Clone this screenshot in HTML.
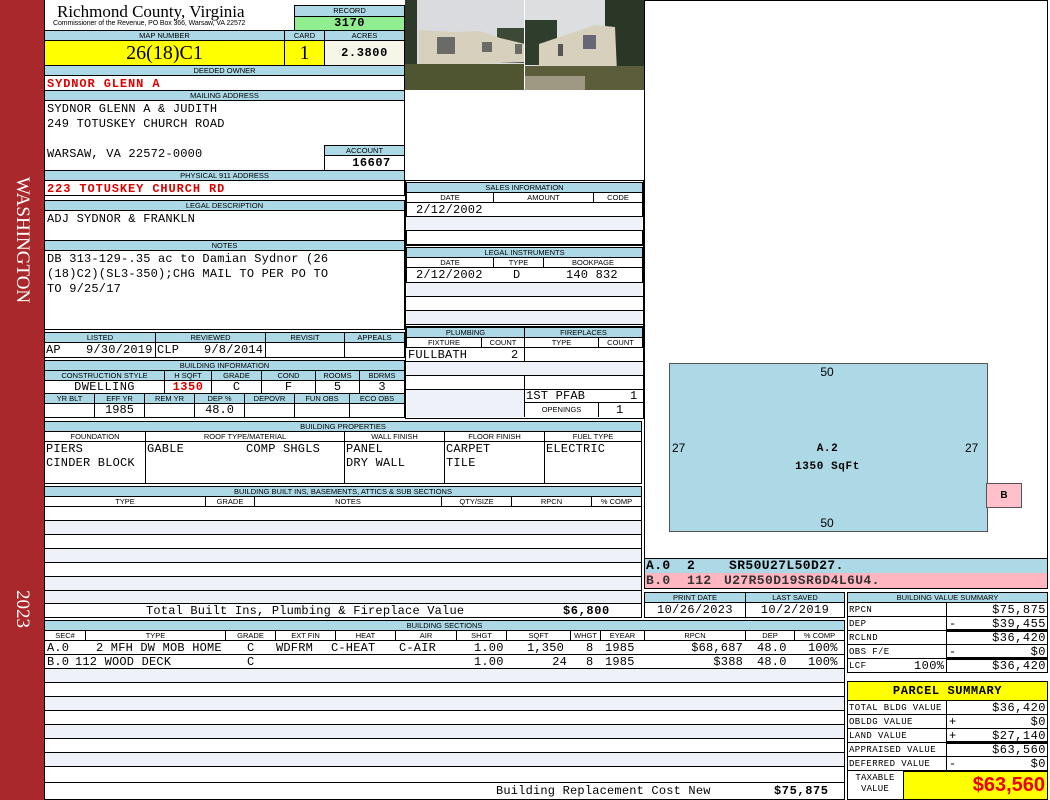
<!DOCTYPE html>
<html><head><meta charset="utf-8"><style>
*{margin:0;padding:0;box-sizing:border-box}
body{width:1050px;height:800px;background:#fff;position:relative;overflow:hidden;font-family:"Liberation Sans",sans-serif}
.a{position:absolute}
.h{position:absolute;background:#add8e6;border:1px solid #000;font:7.5px/9px "Liberation Sans",sans-serif;text-align:center;color:#000;white-space:nowrap;overflow:hidden}
.b{position:absolute;border:1px solid #000;background:#fff}
.m{position:absolute;font:12px/14px "Liberation Mono",monospace;letter-spacing:0.2px;color:#000;white-space:pre}
.r{color:#d00;font-weight:bold;letter-spacing:0.9px}
.l{position:absolute;background:#eef1f8}
.ln{position:absolute;background:#000;height:1px}
.vl{position:absolute;background:#000;width:1px}
.s{font-size:9px;letter-spacing:0.4px}
.rt{text-align:right}
</style></head><body>
<!-- side bar -->
<div class="a" style="left:0;top:0;width:44px;height:800px;background:#a8282b"></div>
<div class="a" style="left:22px;top:240px;transform:translate(-50%,-50%) rotate(90deg);color:#fff;font:19px 'Liberation Serif',serif;white-space:nowrap">WASHINGTON</div>
<div class="a" style="left:22px;top:609px;transform:translate(-50%,-50%) rotate(90deg);color:#fff;font:19px 'Liberation Serif',serif;white-space:nowrap">2023</div>
<div class="vl" style="left:44px;top:0;height:800px"></div>

<!-- title -->
<div class="a" style="left:57px;top:2px;font:17px/20px 'Liberation Serif',serif">Richmond County, Virginia</div>
<div class="a" style="left:53px;top:20px;font:7px/8px 'Liberation Sans',sans-serif;letter-spacing:-0.1px">Commissioner of the Revenue, PO Box 366, Warsaw, VA 22572</div>
<div class="h" style="left:294px;top:5px;width:111px;height:12px;line-height:10px">RECORD</div>
<div class="a" style="left:294px;top:16px;width:111px;height:15px;background:#90ee90;border:1px solid #000;font:bold 12px/13px 'Liberation Mono',monospace;text-align:center;letter-spacing:0.5px">3170</div>

<div class="h" style="left:44px;top:30px;width:241px;height:11px">MAP NUMBER</div>
<div class="h" style="left:284px;top:30px;width:41px;height:11px">CARD</div>
<div class="h" style="left:324px;top:30px;width:81px;height:11px">ACRES</div>
<div class="a" style="left:44px;top:40px;width:241px;height:26px;background:#ffff00;border:1px solid #000;font:20px/24px 'Liberation Serif',serif;text-align:center">26(18)C1</div>
<div class="a" style="left:284px;top:40px;width:41px;height:26px;background:#ffff00;border:1px solid #000;font:20px/24px 'Liberation Serif',serif;text-align:center">1</div>
<div class="a" style="left:324px;top:40px;width:81px;height:26px;background:#f6f6e8;border:1px solid #000;font:bold 12px/24px 'Liberation Mono',monospace;text-align:center;letter-spacing:0.6px">2.3800</div>

<div class="h" style="left:44px;top:65px;width:361px;height:11px">DEEDED OWNER</div>
<div class="b" style="left:44px;top:75px;width:361px;height:16px"></div>
<div class="m r" style="left:47px;top:77px">SYDNOR GLENN A</div>
<div class="h" style="left:44px;top:90px;width:361px;height:11px">MAILING ADDRESS</div>
<div class="b" style="left:44px;top:100px;width:361px;height:71px"></div>
<div class="m" style="left:47px;top:102px;line-height:15px">SYDNOR GLENN A &amp; JUDITH
249 TOTUSKEY CHURCH ROAD</div>
<div class="m" style="left:47px;top:147px">WARSAW, VA 22572-0000</div>
<div class="h" style="left:324px;top:145px;width:81px;height:11px">ACCOUNT</div>
<div class="a" style="left:324px;top:155px;width:81px;height:16px;border:1px solid #000;font:bold 12px/15px 'Liberation Mono',monospace;text-align:center;padding-left:14px;letter-spacing:0.5px">16607</div>
<div class="h" style="left:44px;top:170px;width:361px;height:11px">PHYSICAL 911 ADDRESS</div>
<div class="b" style="left:44px;top:180px;width:361px;height:16px"></div>
<div class="m r" style="left:47px;top:182px">223 TOTUSKEY CHURCH RD</div>

<div class="h" style="left:44px;top:200px;width:361px;height:11px">LEGAL DESCRIPTION</div>
<div class="b" style="left:44px;top:210px;width:361px;height:31px"></div>
<div class="m" style="left:47px;top:212px">ADJ SYDNOR &amp; FRANKLN</div>
<div class="h" style="left:44px;top:240px;width:361px;height:11px">NOTES</div>
<div class="b" style="left:44px;top:250px;width:361px;height:80px"></div>
<div class="m" style="left:47px;top:252px;line-height:15px">DB 313-129-.35 ac to Damian Sydnor (26
(18)C2)(SL3-350);CHG MAIL TO PER PO TO
TO 9/25/17</div>

<!-- listed -->
<div class="h" style="left:44px;top:332px;width:112px;height:11px">LISTED</div>
<div class="h" style="left:155px;top:332px;width:111px;height:11px">REVIEWED</div>
<div class="h" style="left:265px;top:332px;width:80px;height:11px">REVISIT</div>
<div class="h" style="left:344px;top:332px;width:61px;height:11px">APPEALS</div>
<div class="b" style="left:44px;top:342px;width:112px;height:16px"></div>
<div class="b" style="left:155px;top:342px;width:111px;height:16px"></div>
<div class="b" style="left:265px;top:342px;width:80px;height:16px"></div>
<div class="b" style="left:344px;top:342px;width:61px;height:16px"></div>
<div class="m" style="left:46px;top:343px">AP</div>
<div class="m" style="left:86px;top:343px">9/30/2019</div>
<div class="m" style="left:157px;top:343px">CLP</div>
<div class="m" style="left:204px;top:343px">9/8/2014</div>

<!-- building info -->
<div class="h" style="left:44px;top:360px;width:361px;height:11px">BUILDING INFORMATION</div>
<div class="h" style="left:44px;top:370px;width:121px;height:11px">CONSTRUCTION STYLE</div>
<div class="h" style="left:164px;top:370px;width:48px;height:11px">H SQFT</div>
<div class="h" style="left:211px;top:370px;width:51px;height:11px">GRADE</div>
<div class="h" style="left:261px;top:370px;width:55px;height:11px">COND</div>
<div class="h" style="left:315px;top:370px;width:45px;height:11px">ROOMS</div>
<div class="h" style="left:359px;top:370px;width:46px;height:11px">BDRMS</div>
<div class="b" style="left:44px;top:380px;width:121px;height:14px;font:12px/12px 'Liberation Mono',monospace;text-align:center;letter-spacing:0.4px">DWELLING</div>
<div class="b r" style="left:164px;top:380px;width:48px;height:14px;font:bold 12px/12px 'Liberation Mono',monospace;text-align:center;letter-spacing:0.5px">1350</div>
<div class="b" style="left:211px;top:380px;width:51px;height:14px;font:12px/12px 'Liberation Mono',monospace;text-align:center">C</div>
<div class="b" style="left:261px;top:380px;width:55px;height:14px;font:12px/12px 'Liberation Mono',monospace;text-align:center">F</div>
<div class="b" style="left:315px;top:380px;width:45px;height:14px;font:12px/12px 'Liberation Mono',monospace;text-align:center">5</div>
<div class="b" style="left:359px;top:380px;width:46px;height:14px;font:12px/12px 'Liberation Mono',monospace;text-align:center">3</div>
<div class="h" style="left:44px;top:393px;width:51px;height:11px">YR BLT</div>
<div class="h" style="left:94px;top:393px;width:51px;height:11px">EFF YR</div>
<div class="h" style="left:144px;top:393px;width:51px;height:11px">REM YR</div>
<div class="h" style="left:194px;top:393px;width:51px;height:11px">DEP %</div>
<div class="h" style="left:244px;top:393px;width:51px;height:11px">DEPOVR</div>
<div class="h" style="left:294px;top:393px;width:56px;height:11px">FUN OBS</div>
<div class="h" style="left:349px;top:393px;width:56px;height:11px">ECO OBS</div>
<div class="b" style="left:44px;top:403px;width:51px;height:15px"></div>
<div class="b" style="left:94px;top:403px;width:51px;height:15px;font:12px/13px 'Liberation Mono',monospace;text-align:center">1985</div>
<div class="b" style="left:144px;top:403px;width:51px;height:15px"></div>
<div class="b" style="left:194px;top:403px;width:51px;height:15px;font:12px/13px 'Liberation Mono',monospace;text-align:center">48.0</div>
<div class="b" style="left:244px;top:403px;width:51px;height:15px"></div>
<div class="b" style="left:294px;top:403px;width:56px;height:15px"></div>
<div class="b" style="left:349px;top:403px;width:56px;height:15px"></div>

<!-- photos -->
<svg class="a" style="left:405px;top:0" width="119" height="90" viewBox="0 0 119 90">
<rect width="119" height="90" fill="#d9dbde"/><rect x="0" y="0" width="12" height="70" fill="#2d3a2a"/>
<rect x="92" y="28" width="27" height="35" fill="#3c4a35"/>
<polygon points="14,30 50,32 75,31 95,38 120,44 120,62 14,66" fill="#d6d0bc"/>
<rect x="32" y="37" width="18" height="17" fill="#6a6a66"/><rect x="77" y="42" width="10" height="10" fill="#6a6a66"/><rect x="110" y="44" width="7" height="10" fill="#6a6a66"/>
<rect x="0" y="64" width="119" height="26" fill="#4f5530"/></svg>
<svg class="a" style="left:525px;top:0" width="119" height="90" viewBox="0 0 119 90">
<rect width="119" height="90" fill="#dcdee0"/><rect x="0" y="20" width="32" height="45" fill="#2f3d2c"/>
<rect x="80" y="0" width="39" height="80" fill="#2a3626"/>
<polygon points="14,44 70,25 90,27 92,72 14,66" fill="#d6d0bc"/>
<rect x="33" y="44" width="5" height="12" fill="#555"/><rect x="58" y="35" width="13" height="14" fill="#667"/>
<rect x="0" y="66" width="119" height="24" fill="#5c5d3a"/><rect x="0" y="76" width="60" height="14" fill="#9f9882"/></svg>

<!-- sales -->
<div class="b" style="left:405px;top:180px;width:239px;height:67px"></div>
<div class="h" style="left:406px;top:182px;width:237px;height:11px">SALES INFORMATION</div>
<div class="h" style="left:406px;top:192px;width:88px;height:11px;background:#fff">DATE</div>
<div class="h" style="left:493px;top:192px;width:101px;height:11px;background:#fff">AMOUNT</div>
<div class="h" style="left:593px;top:192px;width:50px;height:11px;background:#fff">CODE</div>
<div class="b" style="left:406px;top:202px;width:237px;height:15px"></div>
<div class="l" style="left:407px;top:217px;width:235px;height:13px"></div>
<div class="b" style="left:406px;top:230px;width:237px;height:15px"></div>
<div class="m" style="left:416px;top:203px">2/12/2002</div>

<div class="b" style="left:405px;top:245px;width:239px;height:82px"></div>
<div class="h" style="left:406px;top:247px;width:237px;height:11px">LEGAL INSTRUMENTS</div>
<div class="h" style="left:406px;top:257px;width:88px;height:11px;background:#fff">DATE</div>
<div class="h" style="left:493px;top:257px;width:51px;height:11px;background:#fff">TYPE</div>
<div class="h" style="left:543px;top:257px;width:100px;height:11px;background:#fff">BOOKPAGE</div>
<div class="b" style="left:406px;top:267px;width:237px;height:16px"></div>
<div class="l" style="left:407px;top:283px;width:235px;height:13px"></div>
<div class="ln" style="left:406px;top:296px;width:237px"></div>
<div class="ln" style="left:406px;top:310px;width:237px"></div>
<div class="l" style="left:407px;top:311px;width:235px;height:13px"></div>
<div class="ln" style="left:406px;top:324px;width:237px"></div>
<div class="m" style="left:416px;top:268px">2/12/2002</div>
<div class="m" style="left:513px;top:268px">D</div>
<div class="m" style="left:566px;top:268px">140 832</div>

<!-- plumbing -->
<div class="b" style="left:405px;top:326px;width:239px;height:93px"></div>
<div class="h" style="left:406px;top:327px;width:119px;height:11px">PLUMBING</div>
<div class="h" style="left:524px;top:327px;width:119px;height:11px">FIREPLACES</div>
<div class="h" style="left:406px;top:337px;width:76px;height:11px;background:#fff">FIXTURE</div>
<div class="h" style="left:481px;top:337px;width:44px;height:11px;background:#fff">COUNT</div>
<div class="h" style="left:524px;top:337px;width:75px;height:11px;background:#fff">TYPE</div>
<div class="h" style="left:598px;top:337px;width:45px;height:11px;background:#fff">COUNT</div>
<div class="vl" style="left:524px;top:347px;height:70px"></div>
<div class="ln" style="left:406px;top:361px;width:237px"></div>
<div class="l" style="left:407px;top:362px;width:235px;height:13px"></div>
<div class="ln" style="left:406px;top:375px;width:237px"></div>
<div class="ln" style="left:406px;top:389px;width:237px"></div>
<div class="l" style="left:407px;top:390px;width:117px;height:27px"></div>
<div class="ln" style="left:524px;top:402px;width:119px"></div>
<div class="vl" style="left:598px;top:402px;height:15px"></div>
<div class="m" style="left:408px;top:348px">FULLBATH</div>
<div class="m" style="left:511px;top:348px">2</div>
<div class="m" style="left:526px;top:389px">1ST PFAB</div>
<div class="m" style="left:630px;top:389px">1</div>
<div class="a" style="left:525px;top:404px;width:73px;text-align:center;font:7.5px/11px 'Liberation Sans',sans-serif">OPENINGS</div>
<div class="m" style="left:616px;top:403px">1</div>

<!-- building properties -->
<div class="h" style="left:44px;top:421px;width:598px;height:11px">BUILDING PROPERTIES</div>
<div class="h" style="left:44px;top:431px;width:102px;height:11px;background:#fff">FOUNDATION</div>
<div class="h" style="left:145px;top:431px;width:200px;height:11px;background:#fff">ROOF TYPE/MATERIAL</div>
<div class="h" style="left:344px;top:431px;width:101px;height:11px;background:#fff">WALL FINISH</div>
<div class="h" style="left:444px;top:431px;width:101px;height:11px;background:#fff">FLOOR FINISH</div>
<div class="h" style="left:544px;top:431px;width:98px;height:11px;background:#fff">FUEL TYPE</div>
<div class="b" style="left:44px;top:441px;width:102px;height:43px"></div>
<div class="b" style="left:145px;top:441px;width:200px;height:43px"></div>
<div class="b" style="left:344px;top:441px;width:101px;height:43px"></div>
<div class="b" style="left:444px;top:441px;width:101px;height:43px"></div>
<div class="b" style="left:544px;top:441px;width:98px;height:43px"></div>
<div class="m" style="left:46px;top:442px">PIERS
CINDER BLOCK</div>
<div class="m" style="left:147px;top:442px">GABLE</div>
<div class="m" style="left:246px;top:442px">COMP SHGLS</div>
<div class="m" style="left:346px;top:442px">PANEL
DRY WALL</div>
<div class="m" style="left:446px;top:442px">CARPET
TILE</div>
<div class="m" style="left:546px;top:442px">ELECTRIC</div>

<!-- built ins -->
<div class="h" style="left:44px;top:486px;width:598px;height:11px">BUILDING BUILT INS, BASEMENTS, ATTICS &amp; SUB SECTIONS</div>
<div class="h" style="left:44px;top:496px;width:162px;height:11px;background:#fff">TYPE</div>
<div class="h" style="left:205px;top:496px;width:50px;height:11px;background:#fff">GRADE</div>
<div class="h" style="left:254px;top:496px;width:188px;height:11px;background:#fff">NOTES</div>
<div class="h" style="left:441px;top:496px;width:71px;height:11px;background:#fff">QTY/SIZE</div>
<div class="h" style="left:511px;top:496px;width:81px;height:11px;background:#fff">RPCN</div>
<div class="h" style="left:591px;top:496px;width:51px;height:11px;background:#fff">% COMP</div>
<div class="b" style="left:44px;top:506px;width:598px;height:112px"></div>
<div class="l" style="left:45px;top:520px;width:596px;height:14px"></div>
<div class="l" style="left:45px;top:548px;width:596px;height:14px"></div>
<div class="l" style="left:45px;top:576px;width:596px;height:14px"></div>
<div class="l" style="left:45px;top:591px;width:596px;height:12px"></div>
<div class="ln" style="left:44px;top:520px;width:598px"></div>
<div class="ln" style="left:44px;top:534px;width:598px"></div>
<div class="ln" style="left:44px;top:548px;width:598px"></div>
<div class="ln" style="left:44px;top:562px;width:598px"></div>
<div class="ln" style="left:44px;top:576px;width:598px"></div>
<div class="ln" style="left:44px;top:590px;width:598px"></div>
<div class="ln" style="left:44px;top:603px;width:598px"></div>
<div class="m" style="left:146px;top:604px">Total Built Ins, Plumbing &amp; Fireplace Value</div>
<div class="m" style="left:563px;top:604px;font-weight:bold;letter-spacing:0.6px">$6,800</div>

<!-- building sections -->
<div class="h" style="left:44px;top:620px;width:801px;height:11px">BUILDING SECTIONS</div>
<div class="h" style="left:44px;top:630px;width:42px;height:11px;background:#fff">SEC#</div>
<div class="h" style="left:85px;top:630px;width:141px;height:11px;background:#fff">TYPE</div>
<div class="h" style="left:225px;top:630px;width:51px;height:11px;background:#fff">GRADE</div>
<div class="h" style="left:275px;top:630px;width:61px;height:11px;background:#fff">EXT FIN</div>
<div class="h" style="left:335px;top:630px;width:61px;height:11px;background:#fff">HEAT</div>
<div class="h" style="left:395px;top:630px;width:62px;height:11px;background:#fff">AIR</div>
<div class="h" style="left:456px;top:630px;width:51px;height:11px;background:#fff">SHGT</div>
<div class="h" style="left:506px;top:630px;width:65px;height:11px;background:#fff">SQFT</div>
<div class="h" style="left:570px;top:630px;width:31px;height:11px;background:#fff">WHGT</div>
<div class="h" style="left:600px;top:630px;width:45px;height:11px;background:#fff">EYEAR</div>
<div class="h" style="left:644px;top:630px;width:102px;height:11px;background:#fff">RPCN</div>
<div class="h" style="left:745px;top:630px;width:50px;height:11px;background:#fff">DEP</div>
<div class="h" style="left:794px;top:630px;width:51px;height:11px;background:#fff">% COMP</div>
<div class="b" style="left:44px;top:640px;width:801px;height:160px"></div>
<div class="l" style="left:45px;top:669px;width:799px;height:13px"></div>
<div class="l" style="left:45px;top:697px;width:799px;height:13px"></div>
<div class="l" style="left:45px;top:725px;width:799px;height:13px"></div>
<div class="l" style="left:45px;top:753px;width:799px;height:13px"></div>
<div class="ln" style="left:44px;top:654px;width:801px"></div>
<div class="ln" style="left:44px;top:668px;width:801px"></div>
<div class="ln" style="left:44px;top:682px;width:801px"></div>
<div class="ln" style="left:44px;top:696px;width:801px"></div>
<div class="ln" style="left:44px;top:710px;width:801px"></div>
<div class="ln" style="left:44px;top:724px;width:801px"></div>
<div class="ln" style="left:44px;top:738px;width:801px"></div>
<div class="ln" style="left:44px;top:752px;width:801px"></div>
<div class="ln" style="left:44px;top:766px;width:801px"></div>
<div class="ln" style="left:44px;top:782px;width:801px"></div>
<div class="m" style="left:47px;top:641px">A.0</div>
<div class="m" style="left:96px;top:641px">2 MFH DW MOB HOME</div>
<div class="m" style="left:247px;top:641px">C</div>
<div class="m" style="left:276px;top:641px">WDFRM</div>
<div class="m" style="left:331px;top:641px">C-HEAT</div>
<div class="m" style="left:399px;top:641px">C-AIR</div>
<div class="m" style="left:474px;top:641px">1.00</div>
<div class="m" style="left:527px;top:641px">1,350</div>
<div class="m" style="left:586px;top:641px">8</div>
<div class="m" style="left:605px;top:641px">1985</div>
<div class="m rt" style="left:650px;top:641px;width:93px">$68,687</div>
<div class="m" style="left:757px;top:641px">48.0</div>
<div class="m" style="left:808px;top:641px">100%</div>
<div class="m" style="left:47px;top:655px">B.0</div>
<div class="m" style="left:75px;top:655px">112 WOOD DECK</div>
<div class="m" style="left:247px;top:655px">C</div>
<div class="m" style="left:474px;top:655px">1.00</div>
<div class="m rt" style="left:500px;top:655px;width:67px">24</div>
<div class="m" style="left:586px;top:655px">8</div>
<div class="m" style="left:605px;top:655px">1985</div>
<div class="m rt" style="left:650px;top:655px;width:93px">$388</div>
<div class="m" style="left:757px;top:655px">48.0</div>
<div class="m" style="left:808px;top:655px">100%</div>
<div class="m" style="left:496px;top:784px">Building Replacement Cost New</div>
<div class="m" style="left:774px;top:784px;font-weight:bold;letter-spacing:0.6px">$75,875</div>

<!-- right sketch panel -->
<div class="b" style="left:644px;top:0;width:404px;height:589px"></div>
<div class="a" style="left:669px;top:363px;width:319px;height:169px;background:#add8e6;border:1px solid #555"></div>
<div class="a" style="left:986px;top:483px;width:36px;height:25px;background:#ffc0cb;border:1px solid #555;font:bold 10px/23px 'Liberation Sans',sans-serif;text-align:center">B</div>
<div class="a" style="left:812px;top:365px;width:30px;text-align:center;font:12px 'Liberation Sans',sans-serif">50</div>
<div class="a" style="left:812px;top:516px;width:30px;text-align:center;font:12px 'Liberation Sans',sans-serif">50</div>
<div class="a" style="left:672px;top:441px;font:12px 'Liberation Sans',sans-serif">27</div>
<div class="a" style="left:965px;top:441px;font:12px 'Liberation Sans',sans-serif">27</div>
<div class="a" style="left:775px;top:440px;width:105px;text-align:center;font:bold 11px/18px 'Liberation Mono',monospace;letter-spacing:0.6px">A.2<br>1350 SqFt</div>
<div class="a" style="left:645px;top:558px;width:402px;height:15px;background:#add8e6;border-top:1px solid #000"></div>
<div class="a" style="left:645px;top:573px;width:402px;height:15px;background:#ffb6c1"></div>
<div class="m" style="left:646px;top:559px;font-weight:bold;font-size:13px;letter-spacing:0.4px">A.0</div>
<div class="m" style="left:687px;top:559px;font-weight:bold;font-size:13px">2</div>
<div class="m" style="left:729px;top:559px;font-weight:bold;font-size:13px;letter-spacing:0.4px">SR50U27L50D27.</div>
<div class="m" style="left:646px;top:574px;font-weight:bold;font-size:13px;letter-spacing:0.4px;color:#333">B.0</div>
<div class="m" style="left:687px;top:574px;font-weight:bold;font-size:13px;letter-spacing:0.4px;color:#333">112</div>
<div class="m" style="left:724px;top:574px;font-weight:bold;font-size:13px;letter-spacing:0.4px;color:#333">U27R50D19SR6D4L6U4.</div>

<!-- print date -->
<div class="h" style="left:644px;top:592px;width:102px;height:11px">PRINT DATE</div>
<div class="h" style="left:745px;top:592px;width:100px;height:11px">LAST SAVED</div>
<div class="b" style="left:644px;top:602px;width:102px;height:16px;font:12px/14px 'Liberation Mono',monospace;text-align:center;letter-spacing:0.4px">10/26/2023</div>
<div class="b" style="left:745px;top:602px;width:100px;height:16px;font:12px/14px 'Liberation Mono',monospace;text-align:center;letter-spacing:0.4px">10/2/2019</div>

<!-- building value summary -->
<div class="h" style="left:847px;top:592px;width:201px;height:11px">BUILDING VALUE SUMMARY</div>
<div class="b" style="left:847px;top:602px;width:201px;height:71px"></div>
<div class="vl" style="left:946px;top:602px;height:71px"></div>
<div class="ln" style="left:847px;top:616px;width:201px"></div>
<div class="ln" style="left:847px;top:630px;width:201px"></div>
<div class="ln" style="left:946px;top:629px;width:102px;height:3px"></div>
<div class="ln" style="left:847px;top:644px;width:201px"></div>
<div class="ln" style="left:847px;top:658px;width:201px"></div>
<div class="ln" style="left:946px;top:657px;width:102px;height:3px"></div>
<div class="m s" style="left:849px;top:603px">RPCN</div>
<div class="m s" style="left:849px;top:617px">DEP</div>
<div class="m s" style="left:849px;top:631px">RCLND</div>
<div class="m s" style="left:849px;top:645px">OBS F/E</div>
<div class="m s" style="left:849px;top:659px">LCF</div>
<div class="m" style="left:914px;top:659px;letter-spacing:0.4px">100%</div>
<div class="m" style="left:949px;top:617px">-</div>
<div class="m" style="left:949px;top:645px">-</div>
<div class="m rt" style="left:946px;top:603px;width:100px;letter-spacing:0.5px">$75,875</div>
<div class="m rt" style="left:946px;top:617px;width:100px;letter-spacing:0.5px">$39,455</div>
<div class="m rt" style="left:946px;top:631px;width:100px;letter-spacing:0.5px">$36,420</div>
<div class="m rt" style="left:946px;top:645px;width:100px;letter-spacing:0.5px">$0</div>
<div class="m rt" style="left:946px;top:659px;width:100px;letter-spacing:0.5px">$36,420</div>

<!-- parcel summary -->
<div class="a" style="left:847px;top:681px;width:201px;height:20px;background:#ffff00;border:1px solid #000;font:bold 12px/18px 'Liberation Mono',monospace;text-align:center;letter-spacing:0.6px">PARCEL SUMMARY</div>
<div class="b" style="left:847px;top:700px;width:201px;height:100px"></div>
<div class="vl" style="left:946px;top:700px;height:71px"></div>
<div class="ln" style="left:847px;top:714px;width:201px"></div>
<div class="ln" style="left:847px;top:728px;width:201px"></div>
<div class="ln" style="left:847px;top:742px;width:201px"></div>
<div class="ln" style="left:946px;top:741px;width:102px;height:3px"></div>
<div class="ln" style="left:847px;top:756px;width:201px"></div>
<div class="ln" style="left:847px;top:770px;width:201px"></div>
<div class="m s" style="left:849px;top:701px">TOTAL BLDG VALUE</div>
<div class="m s" style="left:849px;top:715px">OBLDG VALUE</div>
<div class="m s" style="left:849px;top:729px">LAND VALUE</div>
<div class="m s" style="left:849px;top:743px">APPRAISED VALUE</div>
<div class="m s" style="left:849px;top:757px">DEFERRED VALUE</div>
<div class="m" style="left:949px;top:715px">+</div>
<div class="m" style="left:949px;top:729px">+</div>
<div class="m" style="left:949px;top:757px">-</div>
<div class="m rt" style="left:946px;top:701px;width:100px;letter-spacing:0.5px">$36,420</div>
<div class="m rt" style="left:946px;top:715px;width:100px;letter-spacing:0.5px">$0</div>
<div class="m rt" style="left:946px;top:729px;width:100px;letter-spacing:0.5px">$27,140</div>
<div class="m rt" style="left:946px;top:743px;width:100px;letter-spacing:0.5px">$63,560</div>
<div class="m rt" style="left:946px;top:757px;width:100px;letter-spacing:0.5px">$0</div>
<div class="m s" style="left:850px;top:773px;width:50px;text-align:center;line-height:11px;letter-spacing:0.2px">TAXABLE
VALUE</div>
<div class="a" style="left:903px;top:771px;width:145px;height:29px;background:#ffff00;border:1px solid #000;color:#e00;font:bold 20px/27px 'Liberation Sans',sans-serif;text-align:right;padding-right:2px">$63,560</div>
</body></html>
